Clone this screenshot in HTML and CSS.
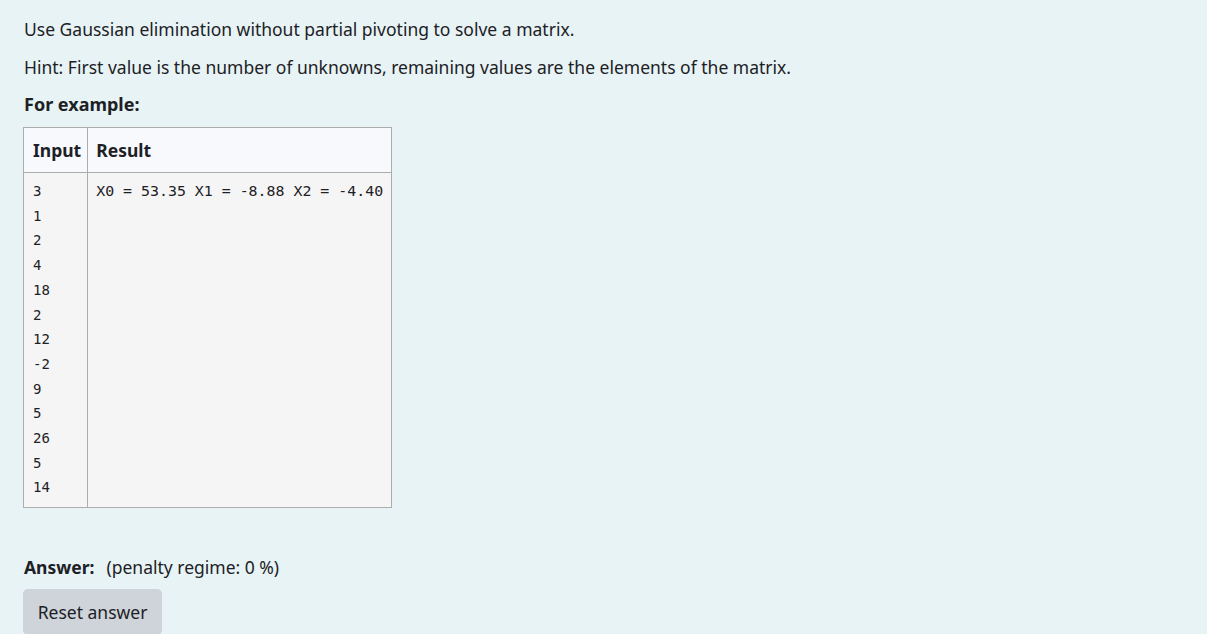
FILE: index.html
```html
<!DOCTYPE html>
<html>
<head>
<meta charset="utf-8">
<link rel="stylesheet" href="styles.css">
</head>
<body>
<div class="question">
  <p class="intro">Use Gaussian elimination without partial pivoting to solve a matrix.</p>
  <p class="hint">Hint: First value is the number of unknowns, remaining values are the elements of the matrix.</p>
  <h4 class="example-title">For example:</h4>
  <table class="examples">
    <thead>
      <tr><th class="col-input">Input</th><th class="col-result">Result</th></tr>
    </thead>
    <tbody>
      <tr>
        <td class="col-input"><pre>3
1
2
4
18
2
12
-2
9
5
26
5
14</pre></td>
        <td class="col-result"><pre>X0 = 53.35 X1 = -8.88 X2 = -4.40</pre></td>
      </tr>
    </tbody>
  </table>
  <div class="answer-line"><span class="answer-label">Answer:</span><span class="penalty">(penalty regime: 0 %)</span></div>
  <button class="reset-btn" type="button">Reset answer</button>
</div>
</body>
</html>
```
FILE: styles.css
```css
html, body {
  margin: 0;
  padding: 0;
  background: #e7f3f5;
}
body {
  font-family: "Noto Sans", "Open Sans", sans-serif;
  font-size: 17.5px;
  line-height: 24px;
  color: #1d2125;
  height: 634px;
  overflow: hidden;
}
.question {
  padding: 17px 0 0 24px;
}
.intro {
  margin: 0;
}
.hint {
  margin: 14px 0 0;
}
.example-title {
  margin: 13px 0 0;
  font-size: 18px;
  font-weight: 700;
}
.examples {
  margin-top: 11px;
  margin-left: -1px;
  border-collapse: collapse;
  border: 1px solid #adadad;
}
.examples th {
  background: #f8f9fd;
  font-weight: 700;
  text-align: left;
  height: 44px;
  padding: 0 8px;
  border: 1px solid #adadad;
}
.examples th.col-input {
  padding: 0 6px 0 9px;
}
.examples td {
  background: #f5f5f5;
  vertical-align: top;
  padding: 6px 8px 7px;
  border: 1px solid #adadad;
}
.examples td.col-input {
  padding-left: 9px;
}
.examples pre {
  margin: 0;
  font-family: "DejaVu Sans Mono", "Liberation Mono", monospace;
  font-size: 14px;
  line-height: 24.7px;
  color: #1d2125;
}
.examples td.col-result pre {
  font-size: 14.9px;
}
.answer-line {
  margin-top: 47px;
}
.answer-label {
  font-weight: 700;
  margin-right: 12px;
}
.reset-btn {
  margin-top: 10px;
  margin-left: -1px;
  font-family: inherit;
  font-size: 17.5px;
  line-height: 24px;
  color: #1d2125;
  background: #ced4da;
  border: none;
  border-radius: 5px;
  padding: 11px 0;
  width: 139px;
  white-space: nowrap;
  text-align: center;
}
```
